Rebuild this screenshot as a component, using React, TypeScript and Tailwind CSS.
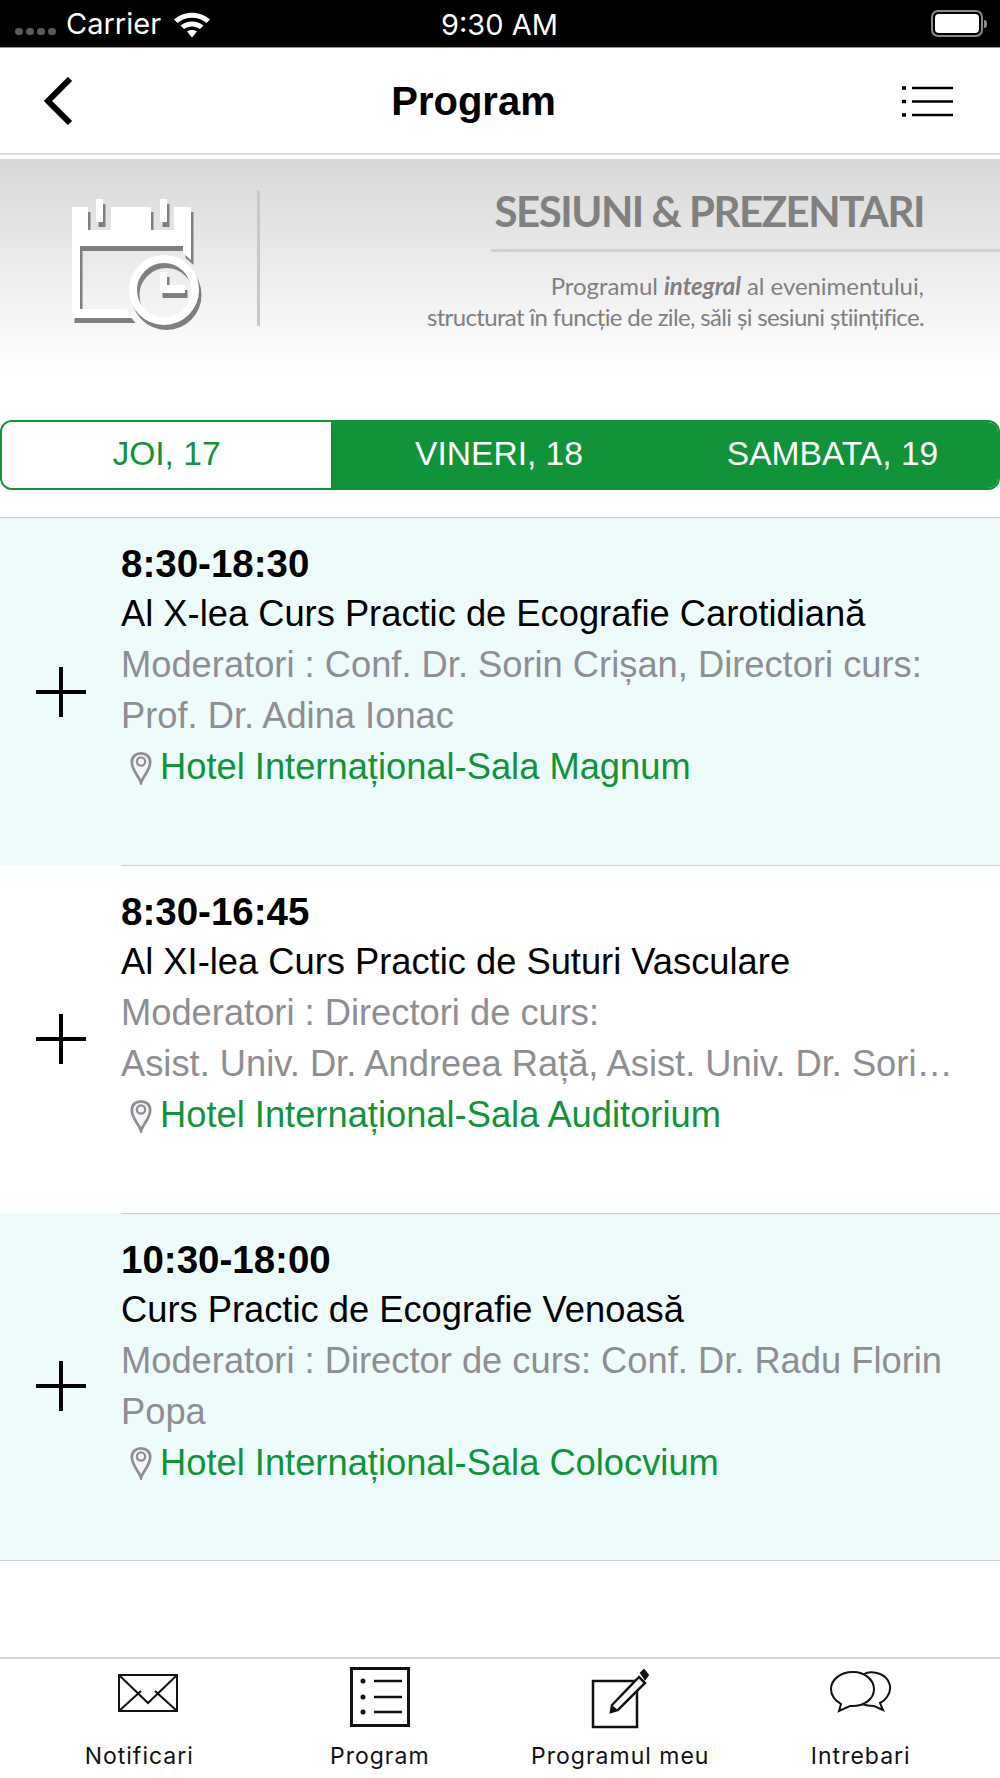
import React from 'react';

const sessions = [
  {
    time: '8:30-18:30',
    title: 'Al X-lea Curs Practic de Ecografie Carotidiană',
    people: 'Moderatori : Conf. Dr. Sorin Crișan, Directori curs: Prof. Dr. Adina Ionac',
    room: 'Hotel Internațional-Sala Magnum',
    tinted: true,
  },
  {
    time: '8:30-16:45',
    title: 'Al XI-lea Curs Practic de Suturi Vasculare',
    people: 'Moderatori : Directori de curs:\nAsist. Univ. Dr. Andreea Rață, Asist. Univ. Dr. Sorin Pavel',
    room: 'Hotel Internațional-Sala Auditorium',
    tinted: false,
  },
  {
    time: '10:30-18:00',
    title: 'Curs Practic de Ecografie Venoasă',
    people: 'Moderatori : Director de curs: Conf. Dr. Radu Florin Popa',
    room: 'Hotel Internațional-Sala Colocvium',
    tinted: true,
  },
];

// white shapes get drawn twice, the first pass is the drop shadow
const CalendarShapes = ({ fill }: { fill: string }) => (
  <g fill={fill}>
    <path d="M12 17H28V40H51V17H91V40H114V17H131V70L123 63V56H20V119H66L73 128H12Z" />
    <rect x="36" y="9" width="7" height="23" />
    <rect x="100" y="9" width="7" height="23" />
    <circle cx="104" cy="100" r="31" fill="none" stroke={fill} strokeWidth="8" />
    <rect x="100" y="82" width="7" height="21" />
    <rect x="101" y="95" width="24" height="8" />
  </g>
);

const CalendarIcon = () => (
  <svg width="150" height="150" viewBox="0 0 150 150" className="shrink-0">
    <g transform="translate(2.5 5)">
      <CalendarShapes fill="#7f7f7f" />
    </g>
    <CalendarShapes fill="#ffffff" />
  </svg>
);

const StatusBar = () => (
  <div className="h-[48px] shrink-0 bg-black text-white flex items-center relative font-['Inter',sans-serif] text-[29px] border-b border-[#8a8a8a]">
    <div className="flex items-center gap-[3px] ml-[15px] mt-[16px]">
      {[0, 1, 2, 3].map((i) => (
        <span key={i} className="w-[8px] h-[7px] rounded-full bg-[#5a5a5a]" />
      ))}
    </div>
    <span className="ml-[10px] mt-[1px]">Carrier</span>
    <svg width="38" height="28" viewBox="0 0 38 28" className="ml-[12px]">
      <path d="M1 9.5C11 0.5 27 0.5 37 9.5L33.5 13C25.5 6 12.5 6 4.500 13Z" fill="#fff" />
      <path d="M7.500 15.500C14 10 24 10 30.500 15.500L27 19C22.500 15.500 15.500 15.500 11 19Z" fill="#fff" />
      <path d="M14 21.500C17 19.500 21 19.500 24 21.500L19 27.500Z" fill="#fff" />
    </svg>
    <span className="absolute left-[441px] top-[3px]">9:30 AM</span>
    <div className="ml-auto mr-[13px] flex items-center">
      <div className="w-[52px] h-[27px] rounded-[7px] border-2 border-[#8a8a8a] p-[2px]">
        <div className="w-full h-full rounded-[4px] bg-white" />
      </div>
      <div className="w-[3px] h-[8px] rounded-r-full bg-[#8a8a8a] ml-[1px]" />
    </div>
  </div>
);

const NavBar = () => (
  <div className="h-[107px] shrink-0 flex items-center justify-between border-b-2 border-[#dcdcdc] pl-[44px] pr-[47px]">
    <svg width="30" height="48" viewBox="0 0 30 48">
      <path d="M26 2L4 24L26 46" fill="none" stroke="#000" strokeWidth="6" />
    </svg>
    <span className="mr-[28px] font-['Liberation_Sans',sans-serif] font-bold text-[40px] leading-none text-black">Program</span>
    <svg width="52" height="32" viewBox="0 0 52 32">
      <g stroke="#000" strokeWidth="2.500">
        <path d="M11 3H52M11 16.500H52M11 30H52" />
        <path d="M1 3H5M1 16.500H5M1 30H5" strokeWidth="3.500" />
      </g>
    </svg>
  </div>
);

const Banner = () => (
  <div className="mt-[4px] h-[211px] shrink-0 flex bg-gradient-to-b from-[#d8d8d8] to-[#ffffff] font-['Lato',sans-serif] text-[#808080]">
    <div className="ml-[60px] mt-[31px]">
      <CalendarIcon />
    </div>
    <div className="ml-[47px] mt-[32px] w-[3px] h-[135px] bg-[#c8c8c8]" />
    <div className="ml-[160px] flex-1 pt-[25px]">
      <div className="pr-[76px] text-right text-[42px] leading-[54px] font-bold tracking-[-1.5px]">
        SESIUNI &amp; PREZENTARI
      </div>
      <div className="ml-[71px] h-[3px] bg-[#cfcfcf] mt-[11px]" />
      <div className="mt-[18px] pr-[76px] text-right text-[24px] leading-[31px] whitespace-nowrap">
        <div className="tracking-[-0.05px]">
          Programul <b className="italic font-bold">integral</b> al evenimentului,
        </div>
        <div className="tracking-[-0.65px]">structurat în funcție de zile, săli și sesiuni științifice.</div>
      </div>
    </div>
  </div>
);

const DayTabs = () => (
  <div className="mt-[50px] h-[70px] shrink-0 flex rounded-[12px] border-2 border-[#109339] overflow-hidden text-[33.6px] font-['Liberation_Sans',sans-serif]">
    <div className="w-[329px] pb-[2px] bg-white text-[#109339] flex items-center justify-center">JOI, 17</div>
    <div className="w-[336px] pb-[2px] bg-[#109339] text-white flex items-center justify-center">VINERI, 18</div>
    <div className="flex-1 pb-[2px] bg-[#109339] text-white flex items-center justify-center">SAMBATA, 19</div>
  </div>
);

const Pin = () => (
  <svg width="22" height="34" viewBox="0 0 24 36" className="shrink-0 ml-[9px] mr-[8px] mt-[2px]">
    <path d="M12 34C10 27 2 21 2 11.500C2 5.500 6.500 2 12 2C17.500 2 22 5.500 22 11.500C22 21 14 27 12 34Z" fill="#f4f7f7" stroke="#8e8e93" strokeWidth="3" />
    <circle cx="12" cy="11" r="4.500" fill="none" stroke="#8e8e93" strokeWidth="2.500" />
  </svg>
);

const SessionRow = ({ session, first }: { session: (typeof sessions)[number]; first: boolean }) => {
  const lines = session.people.split('\n');
  return (
    <div className={`h-[347.25px] flex ${session.tinted ? 'bg-[#eefbfb]' : 'bg-white'}`}>
      <div className="w-[121px] shrink-0 flex items-center justify-center">
        <svg width="50" height="50" viewBox="0 0 50 50">
          <path d="M25 0V50M0 25H50" stroke="#000" strokeWidth="4" />
        </svg>
      </div>
      <div className={`flex-1 min-w-0 pt-[21px] pr-[40px] font-['Liberation_Sans',sans-serif] text-[36.3px] ${first ? '' : 'border-t border-[#d0d0d5]'}`}>
        <div className="font-bold text-[38.5px] leading-[50px] text-black">{session.time}</div>
        <div className="leading-[50px] text-black whitespace-nowrap">{session.title}</div>
        {lines.map((line) => (
          <div key={line} className={`leading-[51px] text-[#8e8e93] ${lines.length > 1 ? 'truncate' : ''}`}>
            {line}
          </div>
        ))}
        <div className="leading-[51px] text-[#109339] flex items-center">
          <Pin />
          {session.room}
        </div>
      </div>
    </div>
  );
};

const TabBar = () => (
  <div className="mt-auto h-[121px] shrink-0 border-t-2 border-[#d4d4d4] px-[19px] grid grid-cols-4 font-['Inter',sans-serif] text-[23px] tracking-[1px] text-[#111]">
    <div className="flex flex-col items-center">
      <div className="h-[80px] flex items-center">
        <svg width="60" height="38" viewBox="0 0 60 38" className="-mt-[12px] ml-[18px]">
          <path d="M1 1H59V37H1ZM1 1L30 29L59 1M1 37L23 17M59 37L37 17" fill="none" stroke="#111" strokeWidth="2" />
        </svg>
      </div>
      <span>Notificari</span>
    </div>
    <div className="flex flex-col items-center">
      <div className="h-[80px] flex items-center">
        <svg width="60" height="60" viewBox="0 0 60 60" className="-mt-[5px]">
          <rect x="1.500" y="1.500" width="57" height="57" fill="none" stroke="#111" strokeWidth="3" />
          <path d="M24 14H52M24 30H52M24 45H52" stroke="#111" strokeWidth="2.500" />
          <circle cx="13" cy="14" r="2.500" fill="#111" />
          <circle cx="13" cy="30" r="2.500" fill="#111" />
          <circle cx="13" cy="45" r="2.500" fill="#111" />
        </svg>
      </div>
      <span>Program</span>
    </div>
    <div className="flex flex-col items-center">
      <div className="h-[80px] flex items-center">
        <svg width="58" height="60" viewBox="0 0 58 60">
          <path d="M44 12H2V58H46V22" fill="none" stroke="#111" strokeWidth="2.500" />
          <path d="M21 36L48 8L54 14L27 41L20 43Z" fill="#fff" stroke="#111" strokeWidth="2.500" />
          <path d="M50 4L53 1L57 6L54 10Z" fill="#111" stroke="#111" strokeWidth="2" />
          <path d="M20 44L22 37L27 41Z" fill="#111" />
        </svg>
      </div>
      <span>Programul meu</span>
    </div>
    <div className="flex flex-col items-center">
      <div className="h-[80px] flex items-center">
        <svg width="62" height="42" viewBox="0 0 62 42" className="-mt-[15px]">
          <path d="M34 3C38 0.500 45 1 50 3C60 7 63 18 57 26C55 29 52 31 50 32L53 39L44 35C40 35 36 34.500 32 33" fill="none" stroke="#111" strokeWidth="2" />
          <path d="M23 1C10 1 1 9 1 18C1 25 6 30 11 33L9 40L20 35C34 36 44 28 44 18C44 9 35 1 23 1Z" fill="#fff" stroke="#111" strokeWidth="2" />
        </svg>
      </div>
      <span>Intrebari</span>
    </div>
  </div>
);

export default function App() {
  return (
    <div className="w-[1000px] h-[1778px] bg-white flex flex-col overflow-hidden">
      <StatusBar />
      <NavBar />
      <Banner />
      <DayTabs />
      <div className="mt-[27px] border-t border-b border-[#d0d0d5]">
        {sessions.map((s, i) => (
          <SessionRow key={s.time} session={s} first={i === 0} />
        ))}
      </div>
      <TabBar />
    </div>
  );
}
